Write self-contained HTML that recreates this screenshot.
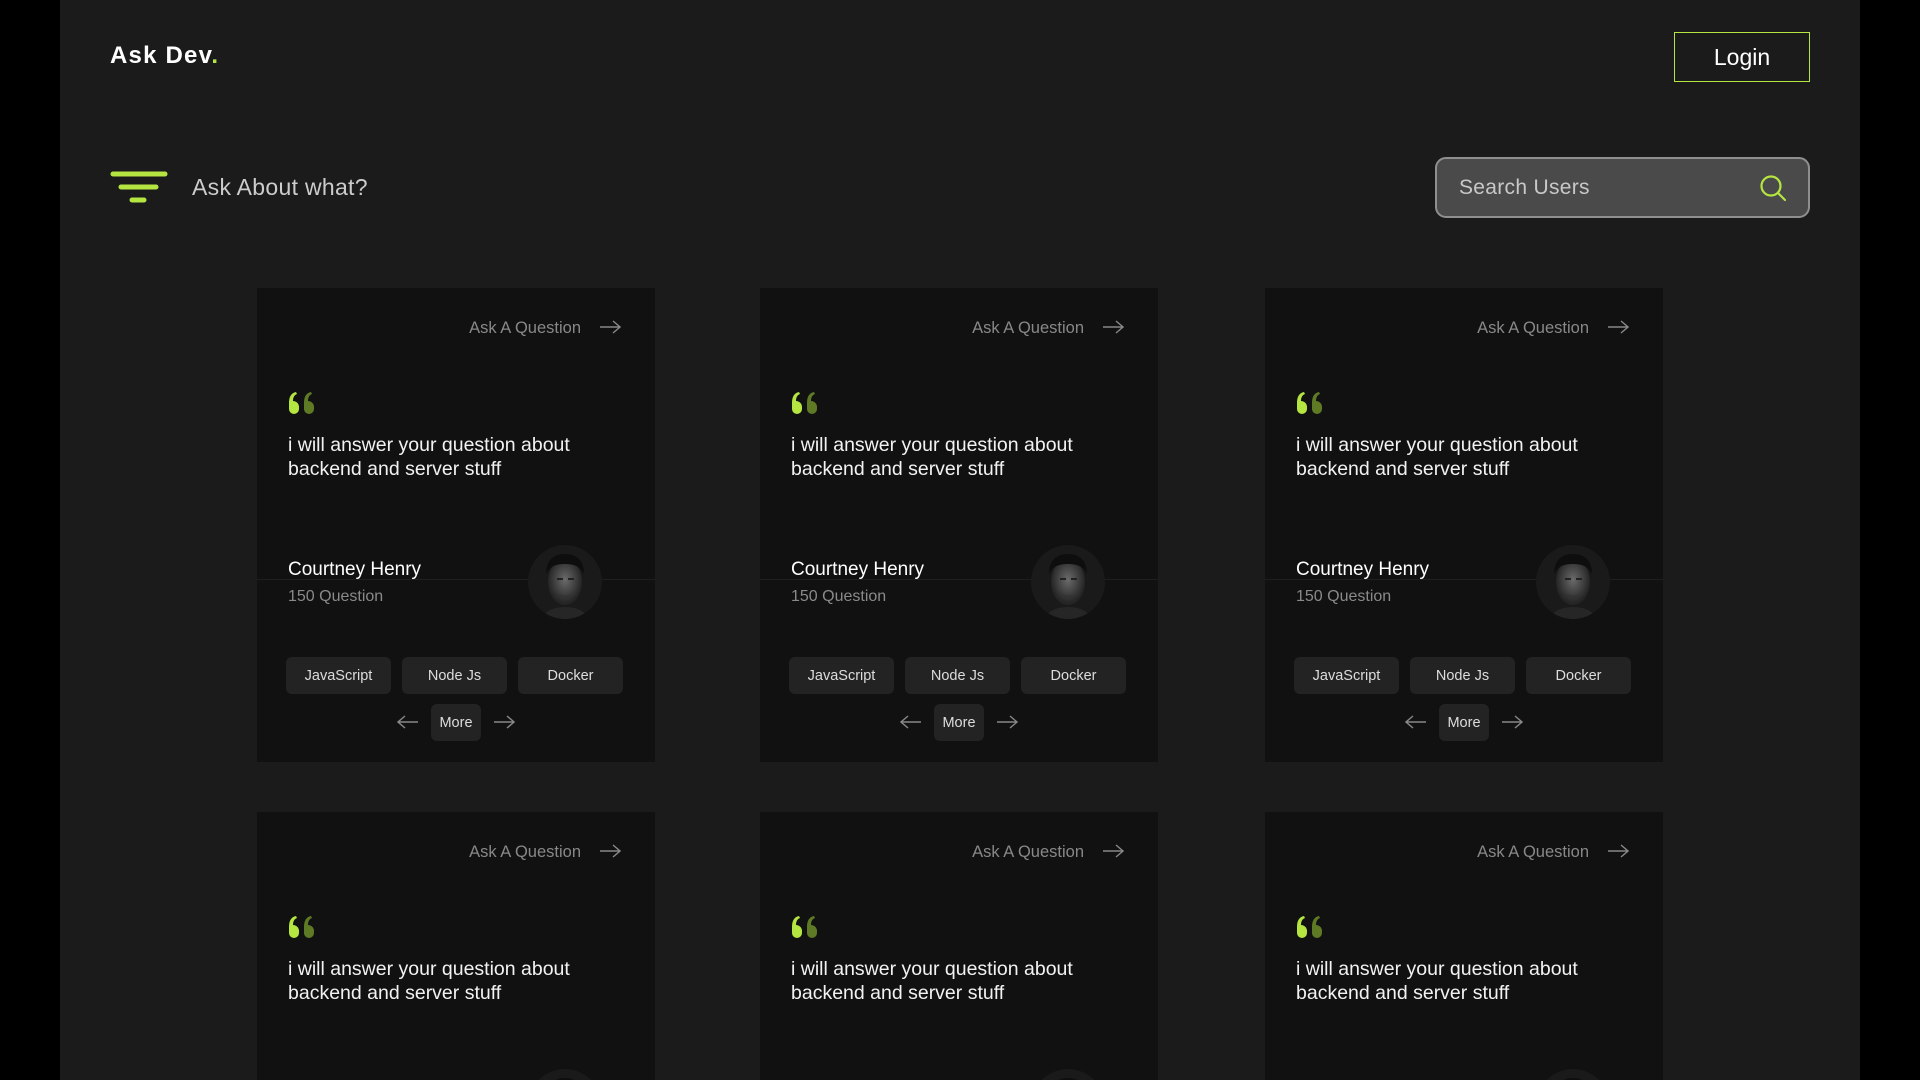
<!DOCTYPE html>
<html><head><meta charset="utf-8"><style>
*{margin:0;padding:0;box-sizing:border-box}
html,body{width:1920px;height:1080px;overflow:hidden}
body{background:#000;font-family:"Liberation Sans",sans-serif}
#wrap{position:relative;width:1920px;height:1080px;overflow:hidden}
.panel{position:absolute;left:60px;top:0;width:1800px;height:1080px;background:#1b1b1b}
.logo{position:absolute;left:110px;top:42px;color:#fff;font-size:24px;font-weight:bold;letter-spacing:1.2px}
.logo span{color:#b5e541}
.login{position:absolute;left:1674px;top:32px;width:136px;height:50px;border:1.5px solid #b5e541;color:#fff;font-size:23px;display:flex;align-items:center;justify-content:center}
.filter{position:absolute;left:110px;top:171px}
.askwhat{position:absolute;left:192px;top:174px;color:#ccc;font-size:23px;letter-spacing:0.3px}
.search{position:absolute;left:1435px;top:157px;width:375px;height:61px;background:#4a4a4a;border:2px solid #8f8f8f;border-radius:11px;color:#c8c8c8;font-size:21px;padding-left:22px;display:flex;align-items:center;letter-spacing:0.3px}
.search svg{position:absolute;right:22px;top:16px}
.card{position:absolute;width:398px;height:474px;background:#111;overflow:hidden}
.ask{position:absolute;right:74px;top:31px;color:#888;font-size:16.5px}
.arr{position:absolute;left:342px;top:32px}
.quote{position:absolute;left:32px;top:104px}
.txt{position:absolute;left:31px;top:145px;color:#f2f2f2;font-size:19.5px;line-height:24px}
.line{position:absolute;left:0;right:0;top:291px;height:1px;background:#1f1f1f}
.name{position:absolute;left:31px;top:271px;color:#fff;font-size:19px}
.cnt{position:absolute;left:31px;top:300px;color:#8a8a8a;font-size:16px}
.av{position:absolute;left:270px;top:256px}
.tag{position:absolute;top:369px;width:105px;height:37px;background:#232323;border-radius:6px;color:#ddd;font-size:14.5px;display:flex;align-items:center;justify-content:center}
.more{position:absolute;left:174px;top:416px;width:50px;height:37px;background:#232323;border-radius:6px;color:#ddd;font-size:14.5px;display:flex;align-items:center;justify-content:center}
.la{position:absolute;left:140px;top:427px}.ra{position:absolute;left:236px;top:427px}
</style></head><body><div id="wrap">
<div class="panel"></div>
<div class="logo">Ask Dev<span>.</span></div>
<div class="login">Login</div>
<svg class="filter" width="58" height="32"><g stroke="#b5e541" stroke-linecap="round" stroke-width="5"><line x1="3" y1="3" x2="55" y2="3"/><line x1="11" y1="16" x2="46" y2="16"/><line x1="22" y1="29" x2="34" y2="29"/></g></svg>
<div class="askwhat">Ask About what?</div>
<div class="search">Search Users<svg width="26" height="27"><circle cx="11" cy="11" r="9.5" stroke="#b5e541" stroke-width="2.2" fill="none"/><line x1="18" y1="18" x2="25" y2="25" stroke="#b5e541" stroke-width="2.2" stroke-linecap="round"/></svg></div>
<div id="cards"></div>
</div>
<script>
var xs=[257,760,1265],ys=[288,812],h='';
var arrR='<svg width="22" height="14"><path d="M1 7H21M14 1L21 7L14 13" stroke="#888" stroke-width="1.4" fill="none"/></svg>';
var arrL='<svg width="22" height="14"><path d="M21 7H1M8 1L1 7L8 13" stroke="#888" stroke-width="1.4" fill="none"/></svg>';
var quote='<svg width="28" height="22"><path d="M5 22a5 5 0 0 1-5-5V11C0 5 2 1 7 0l1 2C5 3 4 6 4 9a6 6 0 0 1 6 6v2a5 5 0 0 1-5 5z" fill="#b5e541"/><path d="M20 22a5 5 0 0 1-5-5V11c0-6 2-10 7-11l1 2c-3 1-4 4-4 7a6 6 0 0 1 6 6v2a5 5 0 0 1-5 5z" fill="#5e7a25"/></svg>';
var av='<svg width="76" height="76"><defs><clipPath id="c"><circle cx="38" cy="38" r="37"/></clipPath><radialGradient id="g" cx="50%" cy="45%" r="50%"><stop offset="0" stop-color="#6a6a6a"/><stop offset="1" stop-color="#252525"/></radialGradient></defs><g clip-path="url(#c)"><rect width="76" height="76" fill="#1a1a1a"/><path d="M14 76c4-10 14-13 24-13s20 3 24 13z" fill="#262626"/><ellipse cx="38" cy="38" rx="17" ry="23" fill="url(#g)"/><path d="M19 30c0-14 8-20 19-20s19 6 19 20c-4-8-10-10-19-10s-15 2-19 10z" fill="#0e0e0e"/><path d="M30 35h6M41 35h6" stroke="#222" stroke-width="2"/><path d="M32 51c4 2 9 2 13 0" stroke="#333" stroke-width="2" fill="none"/></g></svg>';
for(var r=0;r<2;r++)for(var c=0;c<3;c++){
h+='<div class="card" style="left:'+xs[c]+'px;top:'+ys[r]+'px;height:'+(r?268:474)+'px"><div class="ask">Ask A Question</div><div class="arr">'+arrR+'</div><div class="quote">'+quote+'</div><div class="txt">i will answer your question about<br>backend and server stuff</div><div class="line"></div><div class="name">Courtney Henry</div><div class="cnt">150 Question</div><div class="av">'+av+'</div><div class="tag" style="left:29px">JavaScript</div><div class="tag" style="left:145px">Node Js</div><div class="tag" style="left:261px">Docker</div><div class="la">'+arrL+'</div><div class="more">More</div><div class="ra">'+arrR+'</div></div>';}
document.getElementById('cards').innerHTML=h;
</script>
</body></html>
